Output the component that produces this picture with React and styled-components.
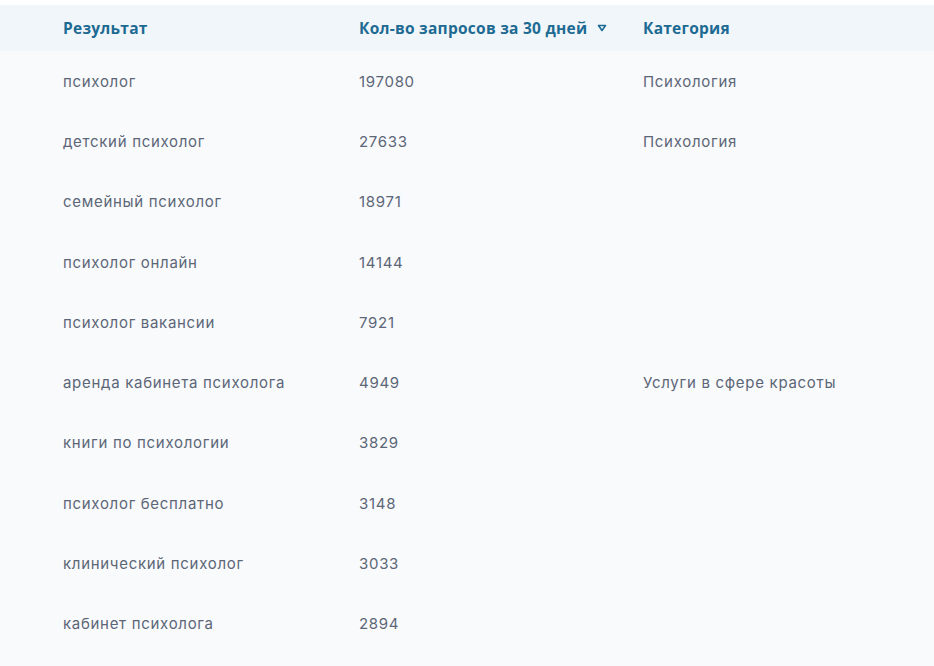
import React from 'react';
import styled, { createGlobalStyle } from 'styled-components';

const rows = [
  { query: 'психолог', count: 197080, category: 'Психология' },
  { query: 'детский психолог', count: 27633, category: 'Психология' },
  { query: 'семейный психолог', count: 18971, category: '' },
  { query: 'психолог онлайн', count: 14144, category: '' },
  { query: 'психолог вакансии', count: 7921, category: '' },
  { query: 'аренда кабинета психолога', count: 4949, category: 'Услуги в сфере красоты' },
  { query: 'книги по психологии', count: 3829, category: '' },
  { query: 'психолог бесплатно', count: 3148, category: '' },
  { query: 'клинический психолог', count: 3033, category: '' },
  { query: 'кабинет психолога', count: 2894, category: '' },
];

const GlobalStyle = createGlobalStyle`
  html, body {
    margin: 0;
    padding: 0;
    background: #ffffff;
  }
  body {
    font-family: Inter, "Open Sans", sans-serif;
  }
`;

const Page = styled.div`
  padding-top: 5px;
  background: #ffffff;
`;

const Table = styled.div`
  background: #f9fafc;
  min-height: 661px;
`;

const Row = styled.div`
  display: grid;
  grid-template-columns: 296px 284px 1fr;
  align-items: center;
  padding-left: 63px;
  height: ${(props) => (props.head ? '46px' : '60.3px')};
  background: ${(props) => (props.head ? '#f1f6fa' : 'transparent')};
`;

const HeadCell = styled.div`
  display: flex;
  align-items: center;
  gap: 10px;
  font-family: "Open Sans", sans-serif;
  font-size: 15.5px;
  font-weight: 700;
  letter-spacing: 0.25px;
  color: #1d6a93;
`;

const Cell = styled.div`
  font-size: 15px;
  font-weight: 400;
  letter-spacing: 0.7px;
  color: #5c6677;
`;

const SortIcon = () => (
  <svg width="10" height="8" viewBox="0 0 10 8">
    <path d="M1.5 1.5 H8.5 L5 6.5 Z" fill="none" stroke="#1d6a93" strokeWidth="1.6" strokeLinejoin="round" />
  </svg>
);

export default function App() {
  return (
    <Page>
      <GlobalStyle />
      <Table>
        <Row head>
          <HeadCell>Результат</HeadCell>
          <HeadCell>
            Кол-во запросов за 30 дней <SortIcon />
          </HeadCell>
          <HeadCell>Категория</HeadCell>
        </Row>
        {rows.map((r) => (
          <Row key={r.query}>
            <Cell>{r.query}</Cell>
            <Cell>{r.count}</Cell>
            <Cell>{r.category}</Cell>
          </Row>
        ))}
      </Table>
    </Page>
  );
}
